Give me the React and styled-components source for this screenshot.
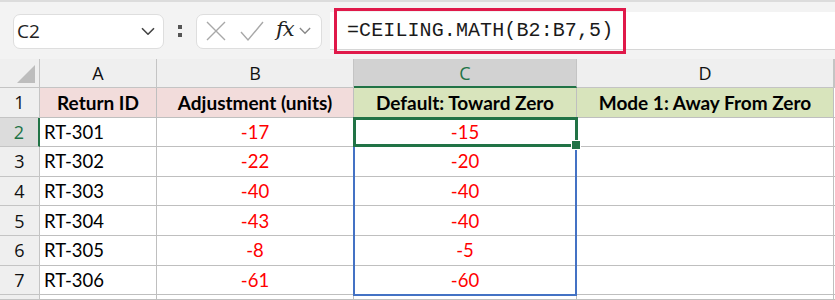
import React from 'react';
import styled, { createGlobalStyle } from 'styled-components';

const GlobalStyle = createGlobalStyle`
  html, body { margin: 0; padding: 0; background: #ffffff; }
  body { font-family: Lato, "Noto Sans", sans-serif; }
`;

const Page = styled.div`
  width: 835px;
  height: 300px;
  overflow: hidden;
  background: #ffffff;
`;

const Toolbar = styled.div`
  height: 59px;
  border-top: 2px solid #dcdcdc;
  background: #f3f3f3;
  display: flex;
  align-items: center;
  padding-left: 13px;
  box-sizing: border-box;
  padding-top: 1px;
`;

const Box = styled.div`
  height: 35px;
  width: ${p => p.$w}px;
  box-sizing: border-box;
  background: #ffffff;
  border: 1px solid #dedede;
  border-radius: 7px;
  display: flex;
  align-items: center;
`;

const NameText = styled.span`
  flex: 1;
  padding-left: 3px;
  font-family: "Open Sans", "Noto Sans", sans-serif;
  font-size: 19px;
  color: #222;
`;

const Dots = styled.div`
  width: 32px;
  display: flex;
  justify-content: center;
`;

const FormulaField = styled.div`
  flex: 1;
  height: 37px;
  margin-left: 8px;
  background: #ffffff;
  border-bottom: 1px solid #d6d6d6;
  display: flex;
  align-items: center;
  padding-left: 4px;
`;

const Highlight = styled.div`
  flex: none;
  height: 46px;
  width: 292px;
  box-sizing: border-box;
  border: 3px solid #e0194a;
  display: flex;
  align-items: center;
  padding-left: 10px;
  font-family: "Liberation Mono", "DejaVu Sans Mono", monospace;
  font-size: 20px;
  color: #1a1a1a;
  letter-spacing: 0.1px;
`;

const Fx = styled.span`
  font-family: "DejaVu Serif", "Liberation Serif", serif;
  font-style: italic;
  font-size: 21px;
  color: #222;
  margin: -4px 5px 0 11px;
  letter-spacing: -1px;
`;

const Stack = styled.div`
  display: grid;
  height: 241px;
  & > * { grid-area: 1 / 1; }
`;

const Sheet = styled.div`
  display: grid;
  grid-template-columns: 40px 117px 197px 223px 257px 1fr;
  grid-template-rows: 29px repeat(7, 29.6px) 1fr;
`;

const Overlay = styled(Sheet)`
  pointer-events: none;
  z-index: 1;
`;

const ColHead = styled.div`
  background: ${p => (p.$active ? '#d2d2d2' : '#efefef')};
  color: ${p => (p.$active ? '#217346' : '#111')};
  border-right: 1px solid #c4c4c4;
  border-bottom: ${p => (p.$active ? '2px solid #217346' : '1px solid #c4c4c4')};
  display: flex;
  align-items: center;
  justify-content: center;
  font-family: "Open Sans", "Noto Sans", sans-serif;
  font-size: 18px;
  box-sizing: border-box;
`;

const Corner = styled.div`
  background: #efefef;
  border-right: 1px solid #c4c4c4;
  border-bottom: 1px solid #c4c4c4;
  display: flex;
  align-items: flex-end;
  justify-content: flex-end;
  padding: 0 4px 4px 0;
  box-sizing: border-box;
`;

const RowHead = styled.div`
  background: ${p => (p.$active ? '#dcdcdc' : '#efefef')};
  color: ${p => (p.$active ? '#217346' : '#111')};
  border-bottom: 1px solid #c4c4c4;
  border-right: ${p => (p.$active ? '2px solid #217346' : '1px solid #c4c4c4')};
  display: flex;
  align-items: center;
  justify-content: center;
  font-family: "Open Sans", "Noto Sans", sans-serif;
  font-size: 18px;
  box-sizing: border-box;
`;

const Cell = styled.div`
  background: ${p => p.$bg || '#ffffff'};
  border-right: 1px solid #bfbfbf;
  border-bottom: 1px solid #bfbfbf;
  display: flex;
  align-items: center;
  justify-content: ${p => (p.$left ? 'flex-start' : 'center')};
  padding-left: ${p => (p.$left ? '4px' : '0')};
  font-size: ${p => (p.$bold ? '19px' : '18.5px')};
  font-weight: ${p => (p.$bold ? 700 : 400)};
  color: ${p => (p.$red ? '#ff0000' : '#000')};
  box-sizing: border-box;
  white-space: nowrap;
  overflow: hidden;
`;

const Filler = styled.div`
  background: #ffffff;
  border-bottom: 1px solid #bfbfbf;
`;

const Range = styled.div`
  grid-column: 4;
  grid-row: 3 / 9;
  margin: -1px 0 -1px -1px;
  border: 2px solid #4472c4;
`;

const Active = styled.div`
  grid-column: 4;
  grid-row: 3;
  margin: -1px -1px 0 -1px;
  border: 3px solid #217346;
  position: relative;
`;

const Handle = styled.span`
  position: absolute;
  right: -6px;
  bottom: -6px;
  width: 8px;
  height: 8px;
  background: #217346;
  border: 1px solid #ffffff;
`;

const Chevron = ({ size = 14, color = '#444', style }) => (
  <svg width={size} height={size * 0.6} viewBox="0 0 14 8" style={style}>
    <path d="M1 1l6 6 6-6" fill="none" stroke={color} strokeWidth="1.6" />
  </svg>
);

const rows = [
  ['RT-301', '-17', '-15'],
  ['RT-302', '-22', '-20'],
  ['RT-303', '-40', '-40'],
  ['RT-304', '-43', '-40'],
  ['RT-305', '-8', '-5'],
  ['RT-306', '-61', '-60'],
];

const PINK = '#f2dcdb';
const GREEN = '#d8e4bc';

export default function App() {
  return (
    <Page>
      <GlobalStyle />
      <Toolbar>
        <Box $w={151}>
          <NameText>C2</NameText>
          <Chevron style={{ marginRight: 8 }} />
        </Box>
        <Dots>
          <svg width="6" height="16" viewBox="0 0 6 16">
            <rect x="1" y="2" width="4" height="4" fill="#555" />
            <rect x="1" y="10" width="4" height="4" fill="#555" />
          </svg>
        </Dots>
        <Box $w={126}>
          <svg width="22" height="22" viewBox="0 0 22 22" style={{ marginLeft: 8 }}>
            <path d="M2 2l18 18M20 2L2 20" stroke="#a8a8a8" strokeWidth="1.4" fill="none" />
          </svg>
          <svg width="26" height="22" viewBox="0 0 26 22" style={{ marginLeft: 12 }}>
            <path d="M2 12l7 8L24 2" stroke="#a8a8a8" strokeWidth="1.4" fill="none" />
          </svg>
          <Fx>fx</Fx>
          <Chevron size={12} color="#888" />
        </Box>
        <FormulaField>
          <Highlight>=CEILING.MATH(B2:B7,5)</Highlight>
        </FormulaField>
      </Toolbar>
      <Stack>
        <Sheet>
          <Corner>
            <svg width="18" height="18" viewBox="0 0 18 18">
              <path d="M18 0V18H0Z" fill="#bdbdbd" />
            </svg>
          </Corner>
          <ColHead>A</ColHead>
          <ColHead>B</ColHead>
          <ColHead $active>C</ColHead>
          <ColHead>D</ColHead>
          <ColHead />

          <RowHead>1</RowHead>
          <Cell $bg={PINK} $bold>Return ID</Cell>
          <Cell $bg={PINK} $bold>Adjustment (units)</Cell>
          <Cell $bg={GREEN} $bold>Default: Toward Zero</Cell>
          <Cell $bg={GREEN} $bold>Mode 1: Away From Zero</Cell>
          <Filler />

          {rows.map(([id, adj, def], i) => (
            <React.Fragment key={id}>
              <RowHead $active={i === 0}>{i + 2}</RowHead>
              <Cell $left>{id}</Cell>
              <Cell $red>{adj}</Cell>
              <Cell $red>{def}</Cell>
              <Cell />
              <Filler />
            </React.Fragment>
          ))}

          <RowHead />
          <Cell />
          <Cell />
          <Cell />
          <Cell />
          <Filler />
        </Sheet>
        <Overlay>
          <Range />
          <Active>
            <Handle />
          </Active>
        </Overlay>
      </Stack>
    </Page>
  );
}
